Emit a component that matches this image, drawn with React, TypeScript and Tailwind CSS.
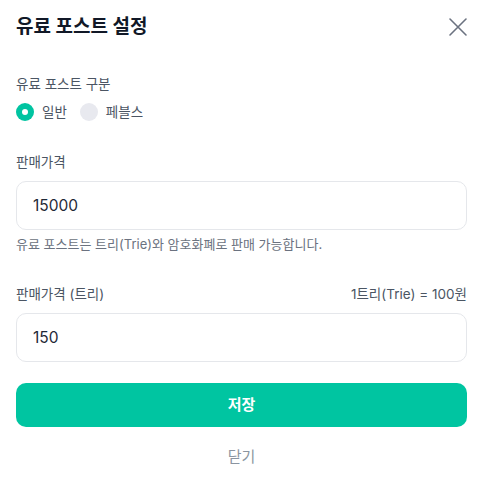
import { useState } from "react";

const font = { fontFamily: '"Inter", "Noto Sans CJK KR", sans-serif' };

function Radio({ checked, label, onClick }: { checked: boolean; label: string; onClick: () => void }) {
  return (
    <button type="button" onClick={onClick} className="flex items-center gap-2">
      {checked ? (
        <span className="flex h-[18px] w-[18px] items-center justify-center rounded-full bg-[#00c4a1]">
          <span className="h-[6px] w-[6px] rounded-full bg-white" />
        </span>
      ) : (
        <span className="h-[18px] w-[18px] rounded-full bg-[#e8e9ef]" />
      )}
      <span className="text-[13.5px] text-[#4b5563]">{label}</span>
    </button>
  );
}

export default function App() {
  const [kind, setKind] = useState<"normal" | "pebbles">("normal");
  const [price, setPrice] = useState("15000");
  const [trie, setTrie] = useState("150");

  return (
    <div className="w-[483px] h-[504px] bg-white px-4" style={font}>
      <header className="flex items-center justify-between pt-[14px]">
        <h1 className="text-[19px] font-bold text-[#111827] leading-[26px]">유료 포스트 설정</h1>
        <button type="button" className="mr-[-2px] text-[#6b7280]">
          <svg width="22" height="22" viewBox="0 0 22 22" fill="none" stroke="currentColor" strokeWidth="1.6" strokeLinecap="round">
            <path d="M3 3L19 19M19 3L3 19" />
          </svg>
        </button>
      </header>

      <div className="mt-[34px]">
        <div className="text-[13.5px] text-[#4b5563] leading-[20px]">유료 포스트 구분</div>
        <div className="mt-[8px] flex items-center gap-[13px]">
          <Radio checked={kind === "normal"} label="일반" onClick={() => setKind("normal")} />
          <Radio checked={kind === "pebbles"} label="페블스" onClick={() => setKind("pebbles")} />
        </div>
      </div>

      <div className="mt-[30px]">
        <div className="text-[13.5px] text-[#4b5563] leading-[20px]">판매가격</div>
        <input
          value={price}
          onChange={(e) => setPrice(e.target.value)}
          className="mt-[9px] h-[49px] w-full rounded-[10px] border border-[#e5e7eb] px-4 text-[15.5px] text-[#1f2937] outline-none"
        />
        <p className="mt-[4px] text-[13px] text-[#6b7280] leading-[20px]">
          유료 포스트는 트리(Trie)와 암호화폐로 판매 가능합니다.
        </p>
      </div>

      <div className="mt-[30px]">
        <div className="flex items-center justify-between text-[13.5px] text-[#4b5563] leading-[20px]">
          <span>판매가격 (트리)</span>
          <span>1트리(Trie) = 100원</span>
        </div>
        <input
          value={trie}
          onChange={(e) => setTrie(e.target.value)}
          className="mt-[9px] h-[49px] w-full rounded-[10px] border border-[#e5e7eb] px-4 text-[15.5px] text-[#1f2937] outline-none"
        />
      </div>

      <button
        type="button"
        className="mt-[21px] h-[44px] w-full rounded-[10px] bg-[#00c5a1] text-[15px] font-bold text-white"
      >
        저장
      </button>
      <button type="button" className="mt-[8px] h-[44px] w-full text-[15px] text-[#8b95a1]">
        닫기
      </button>
    </div>
  );
}
